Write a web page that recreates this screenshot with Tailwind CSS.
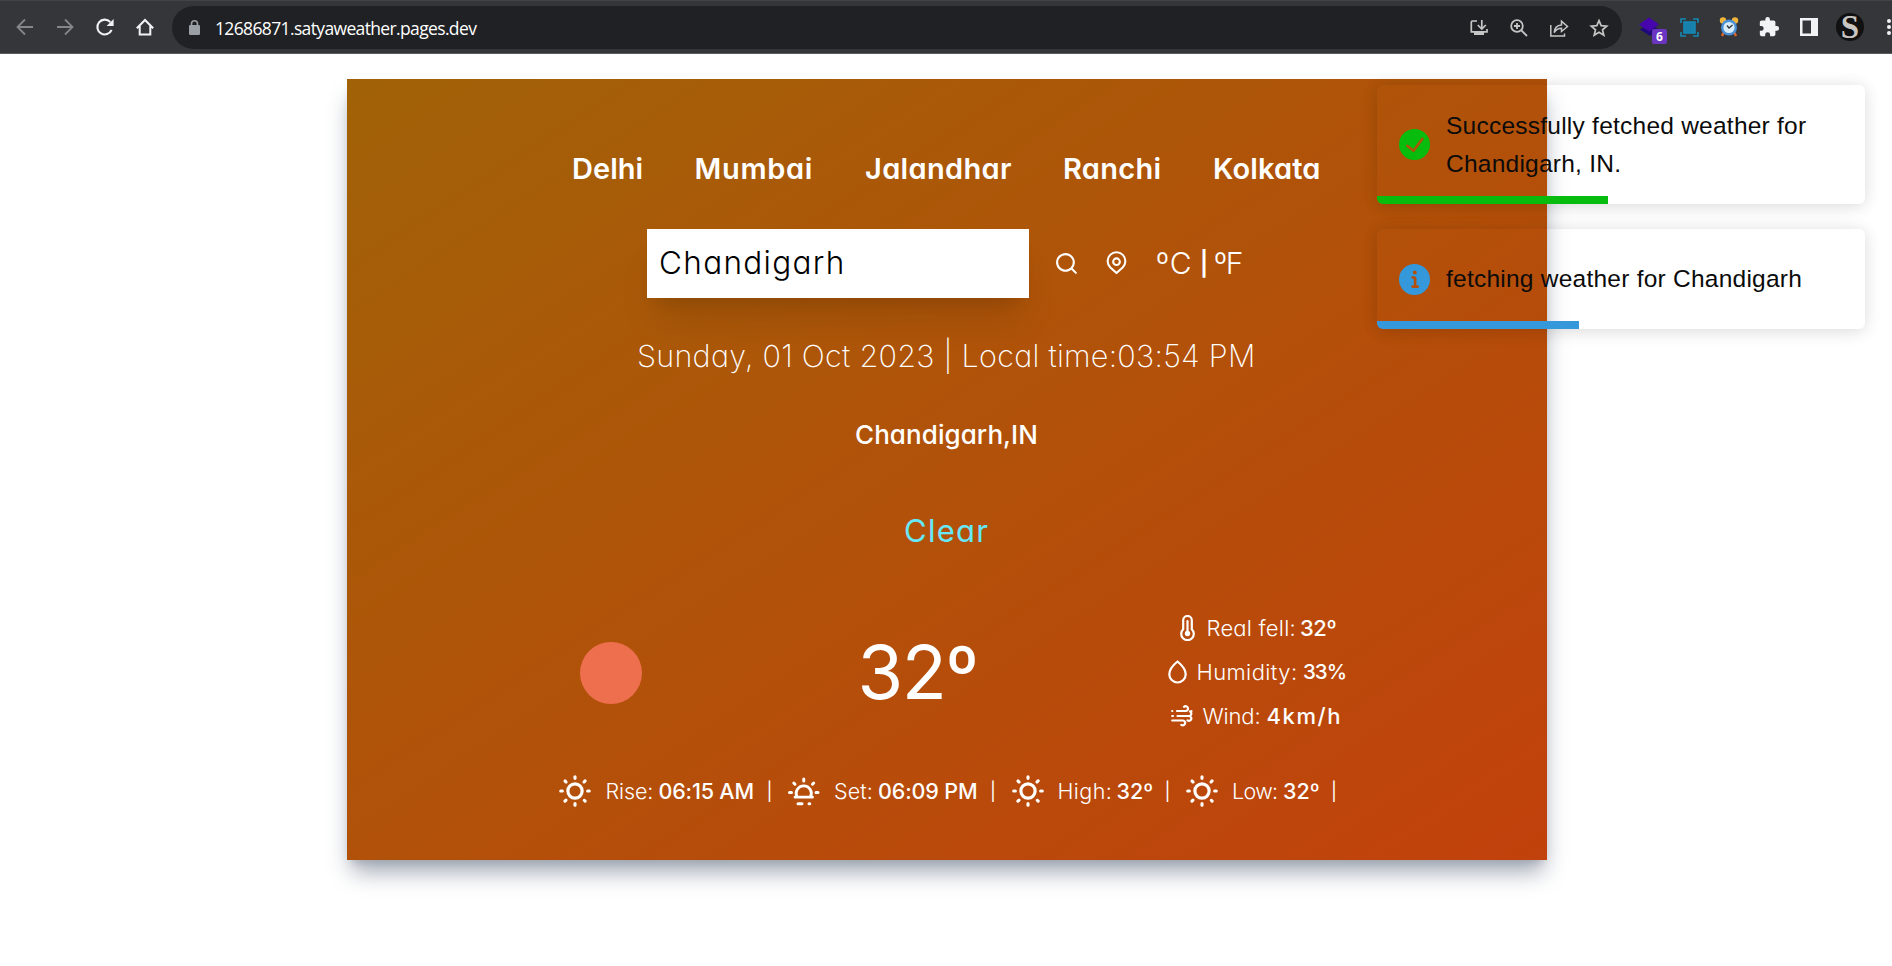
<!DOCTYPE html>
<html lang="en">
<head>
<meta charset="utf-8">
<title>Weather</title>
<script src="https://cdn.jsdelivr.net/npm/@tailwindcss/browser@4"></script>
</head>
<body class="relative h-[966px] w-[1892px] overflow-hidden bg-white font-['Inter',sans-serif]">
<svg class="hidden">
  <symbol id="sun" viewBox="0 0 24 24"><path fill="currentColor" d="M5.64,17l-.71.71a1,1,0,0,0,0,1.41,1,1,0,0,0,1.41,0l.71-.71A1,1,0,0,0,5.64,17ZM5,12a1,1,0,0,0-1-1H3a1,1,0,0,0,0,2H4A1,1,0,0,0,5,12Zm7-7a1,1,0,0,0,1-1V3a1,1,0,0,0-2,0V4A1,1,0,0,0,12,5ZM5.64,7.05a1,1,0,0,0,.7.29,1,1,0,0,0,.71-.29,1,1,0,0,0,0-1.41l-.71-.71A1,1,0,0,0,4.93,6.34Zm12,.29a1,1,0,0,0,.7-.29l.71-.71a1,1,0,1,0-1.41-1.41L17,5.64a1,1,0,0,0,0,1.41A1,1,0,0,0,17.66,7.34ZM21,11H20a1,1,0,0,0,0,2h1a1,1,0,0,0,0-2Zm-9,8a1,1,0,0,0-1,1v1a1,1,0,0,0,2,0V20A1,1,0,0,0,12,19ZM18.36,17A1,1,0,0,0,17,18.36l.71.71a1,1,0,0,0,1.41,0,1,1,0,0,0,0-1.41ZM12,6.5A5.5,5.5,0,1,0,17.5,12,5.51,5.51,0,0,0,12,6.5Zm0,9A3.5,3.5,0,1,1,15.5,12,3.5,3.5,0,0,1,12,15.5Z"/></symbol>
</svg>

<!-- Browser toolbar -->
<header class="flex h-[54px] items-start border-t border-b border-t-[#424347] border-b-[#5b5c60] bg-[#35363a]">
  <div class="flex h-[52px] w-[172px] shrink-0 items-center pl-[15px]">
    <svg class="h-5 w-5 text-[#85868a]" viewBox="0 0 20 20" fill="none" stroke="currentColor" stroke-width="1.8"><path d="M18 10H3M10 2.500L2.500 10L10 17.500"/></svg>
    <svg class="ml-5 h-5 w-5 text-[#85868a]" viewBox="0 0 20 20" fill="none" stroke="currentColor" stroke-width="1.800"><path d="M2 10H17M10 2.500L17.500 10L10 17.500"/></svg>
    <svg class="ml-5 h-5 w-5 text-[#f1f3f4]" viewBox="0 0 20 20"><path d="M16.600 12.800A7.400 7.400 0 1 1 15.200 5" fill="none" stroke="currentColor" stroke-width="2.100"/><path d="M18.600 2V9H11.600Z" fill="currentColor"/></svg>
    <svg class="ml-5 h-5 w-5 text-[#f1f3f4]" viewBox="0 0 20 20" fill="none" stroke="currentColor" stroke-width="2"><path d="M1.800 11.300L10 3L18.200 11.300M4.700 9V17.500H15.300V9"/></svg>
  </div>
  <div class="mt-[5px] flex h-[43px] w-[1450px] shrink-0 items-center rounded-full bg-[#202124] pl-[17px]">
    <svg class="h-[15px] w-[11px]" viewBox="0 0 11 15"><rect y="5" width="11" height="10" rx="1.200" fill="#9aa0a6"/><path d="M2.500 6V3.800a3 3 0 0 1 6 0V6" fill="none" stroke="#9aa0a6" stroke-width="1.600"/></svg>
    <span class="ml-[15px] w-[1254px] font-['Open_Sans',sans-serif] text-[17.500px] leading-6 tracking-[-0.64px] text-white">12686871.satyaweather.pages.dev</span>
    <span class="flex items-center gap-5 text-[#c4c7c5]">
      <svg class="h-5 w-5" viewBox="0 0 20 20" fill="none" stroke="currentColor" stroke-width="1.700"><path d="M8 3H3.500a1.200 1.200 0 0 0-1.200 1.200V13.800H18V11M12.800 2V10.500M8.800 7L12.800 11L16.800 7"/><path d="M5 14h10v3H5z" fill="currentColor" stroke="none"/></svg>
      <svg class="h-5 w-5" viewBox="0 0 20 20" fill="none" stroke="currentColor" stroke-width="1.800"><circle cx="8" cy="8" r="5.800"/><path d="M12.500 12.500L18 18M5 8H11M8 5V11"/></svg>
      <svg class="h-5 w-5" viewBox="0 0 20 20" fill="none" stroke="currentColor" stroke-width="1.500"><path d="M1.800 7V18H15.500V15.500M5.200 14.500C5.500 10 8 7.300 12.500 7V3.200L18.500 8.500L12.500 13.500V10.300C9 10.300 7 11.500 5.200 14.500Z"/></svg>
      <svg class="h-5 w-5" viewBox="0 0 20 20" fill="none" stroke="currentColor" stroke-width="1.700"><path d="M10 2.600L12.200 7.700L17.700 8.200L13.500 11.800L14.800 17.200L10 14.300L5.200 17.200L6.500 11.800L2.300 8.200L7.800 7.700Z"/></svg>
    </span>
  </div>
  <div class="flex h-[52px] flex-1 items-center pl-[17px]">
    <div class="relative h-5 w-7 shrink-0">
      <svg class="h-5 w-5" viewBox="0 0 20 20"><path d="M1 12.500L10 6.500L20 12.500L11 19Z" fill="#1e0a78"/><path d="M0 7.500L10 0.500L20 7.500L10 14.500Z" fill="#4706ad"/></svg>
      <span class="absolute left-[13px] top-3 flex h-[15px] w-[15px] items-center justify-center rounded-xs bg-[#6a35c0] font-['Open_Sans',sans-serif] text-[12px] leading-none font-bold text-white">6</span>
    </div>
    <svg class="ml-[13px] h-[19px] w-[19px] shrink-0" viewBox="0 0 19 19" fill="none" stroke="#1589b4" stroke-width="1.600"><path d="M1 5V1H6M13 1H18V5M18 14V18H13M6 18H1V14"/><rect x="4" y="4" width="11" height="11" fill="#1780ab"/></svg>
    <svg class="ml-5 h-5 w-5 shrink-0" viewBox="0 0 20 20"><path d="M5 15L3 19M15 15L17 19" stroke="#e0662a" stroke-width="2.400"/><circle cx="4" cy="3.500" r="3.200" fill="#f2b53a"/><circle cx="16" cy="3.500" r="3.200" fill="#f2b53a"/><circle cx="10" cy="10.500" r="8" fill="#4a90d6"/><circle cx="10" cy="10.500" r="5.600" fill="#d8ecfa"/><path d="M8 8.500L10 11L13.500 8" fill="none" stroke="#333" stroke-width="1.300"/></svg>
    <svg class="ml-[19px] h-[22px] w-[22px] shrink-0" viewBox="0 0 24 24"><path fill="#f1f3f4" d="M20.500 11H19V7c0-1.100-.9-2-2-2h-4V3.500a2.500 2.500 0 0 0-5 0V5H4c-1.100 0-2 .9-2 2v3.800h1.500a2.700 2.700 0 0 1 0 5.400H2V20c0 1.100.9 2 2 2h3.800v-1.500a2.700 2.700 0 0 1 5.400 0V22H17c1.100 0 2-.9 2-2v-4h1.500a2.500 2.500 0 0 0 0-5z"/></svg>
    <svg class="ml-[20px] h-[18px] w-[18px] shrink-0" viewBox="0 0 18 18"><path fill="#f1f3f4" fill-rule="evenodd" d="M0 0H18V18H0ZM2.500 2.500V15.500H11V2.500Z"/></svg>
    <span class="ml-[18px] flex h-7 w-7 shrink-0 items-center justify-center rounded-full bg-[#111] font-['Liberation_Serif',serif] text-[33px] leading-none font-bold text-[#c9c6c2]">S</span>
    <span class="ml-[23px] flex shrink-0 flex-col gap-[2px]"><i class="h-1 w-1 rounded-full bg-[#f1f3f4]"></i><i class="h-1 w-1 rounded-full bg-[#f1f3f4]"></i><i class="h-1 w-1 rounded-full bg-[#f1f3f4]"></i></span>
  </div>
</header>

<!-- Weather card -->
<main class="mt-[25px] ml-[347px] flex h-[781px] w-[1200px] flex-col bg-linear-to-br/srgb from-[#a16207] to-[#c2410c] pt-[70px] whitespace-nowrap text-white shadow-[0_15px_22.5px_-4.5px_#9ca3af,0_6px_9px_-6px_#9ca3af] [font-feature-settings:'cv11']">
  <nav class="flex h-10 shrink-0 items-center pl-[225px] text-[29px] font-semibold">
    <span class="w-[122.500px] tracking-[0.001em]">Delhi</span>
    <span class="w-[170.500px] tracking-[0.024em]">Mumbai</span>
    <span class="w-[198px] tracking-[0.012em]">Jalandhar</span>
    <span class="w-[150px] tracking-[0.01em]">Ranchi</span>
    <span class="tracking-[0.005em]">Kolkata</span>
  </nav>

  <div class="mt-10 flex h-[69px] shrink-0 items-center pl-[300px] text-[30px] font-light">
    <div class="flex h-[69px] w-[382px] items-center bg-white pb-px pl-3 text-[31.500px] tracking-[0.042em] text-black shadow-[0_30px_37.5px_-7.5px_rgb(0_0_0/0.1),0_12px_15px_-9px_rgb(0_0_0/0.1)]">Chandigarh</div>
    <svg class="ml-[25px] h-[25px] w-[25px]" viewBox="0 0 24 24"><path fill="currentColor" d="M21.710,20.290,18,16.610A9,9,0,1,0,16.610,18l3.680,3.680a1,1,0,0,0,1.420,0A1,1,0,0,0,21.710,20.290ZM11,18a7,7,0,1,1,7-7A7,7,0,0,1,11,18Z"/></svg>
    <svg class="ml-[24.500px] h-[25px] w-[25px]" viewBox="0 0 24 24" fill="none" stroke="currentColor" stroke-width="2" stroke-linejoin="round"><path d="M12 21.200L6.100 15.800A8.500 8.500 0 1 1 17.900 15.800Z"/><circle cx="12" cy="10.300" r="3.200"/></svg>
    <span class="ml-[27.500px] w-9 tracking-[0.03em]">ºC</span>
    <span class="flex w-[24px] justify-center text-[24px] font-semibold">|</span>
    <span class="-ml-[2px] text-[30px] tracking-[-0.04em]">ºF</span>
  </div>

  <div class="mt-[38px] h-10 shrink-0 pl-[290px] text-[30.500px] leading-10 font-extralight tracking-[0.009em]">Sunday, 01 Oct 2023 | Local time:03:54 PM</div>
  <div class="mt-[41px] h-9 shrink-0 pl-[508px] text-[26px] leading-9 font-medium tracking-[0.003em]">Chandigarh,IN</div>
  <div class="mt-[58px] h-10 shrink-0 pl-[557px] text-[31px] leading-10 tracking-[0.04em] text-[#67e8f9]">Clear</div>

  <div class="mt-[55px] flex h-[132px] shrink-0 items-center pl-[232.500px]">
    <div class="mt-[2px] h-[62px] w-[62px] rounded-full bg-[#ee6f4e]"></div>
    <div class="ml-[216px] w-[302.500px] text-[74px] leading-none tracking-[-0.019em]">32º</div>
    <div class="flex flex-col text-[22px] leading-[44px]">
      <div class="flex items-center pl-5">
        <svg class="h-[26px] w-[15px]" viewBox="0 0 15 26" fill="none" stroke="currentColor"><path d="M3.200 14.200V5.300a4.300 4.300 0 0 1 8.600 0v8.900a6.300 6.300 0 1 1-8.600 0Z" stroke-width="2.200"/><circle cx="7.500" cy="18.500" r="2.700" fill="currentColor" stroke="none"/><path d="M7.500 18V6" stroke-width="2.200" stroke-linecap="round"/></svg>
        <span class="ml-[11.500px] w-[93.500px] font-light tracking-[0.01em]">Real fell:</span><span class="font-medium tracking-[-0.02em]">32º</span>
      </div>
      <div class="flex items-center pl-2">
        <svg class="h-6 w-[19px]" viewBox="0 0 19 24" fill="none" stroke="currentColor" stroke-width="2.200" stroke-linejoin="round"><path d="M9.500 1.500C12 3.500 17.700 8.500 17.700 14.300A8.200 8.200 0 0 1 1.300 14.300C1.300 8.500 7 3.500 9.500 1.500Z"/></svg>
        <span class="ml-[9.500px] w-[106.500px] font-light tracking-[0.018em]">Humidity:</span><span class="text-[20.500px] font-medium tracking-[-0.05em]">33%</span>
      </div>
      <div class="flex items-center pl-[11px]">
        <svg class="h-[22px] w-[22px]" viewBox="0 0 22 22" fill="none" stroke="currentColor" stroke-width="2.200" stroke-linecap="round"><path d="M1.200 6H1.300M6 6H14.700A2.400 2.400 0 1 0 13 1.800M20.500 6V6.100M6.500 11H18.500A2.400 2.400 0 0 0 19 6.500M18 11A2.400 2.400 0 1 1 16.500 15.300M1.200 11H2M1.200 15.500H9.500M9.500 15.500H12A2.400 2.400 0 1 1 10.300 19.800"/></svg>
        <span class="ml-[9.500px] w-[64px] font-light tracking-[-0.008em]">Wind:</span><span class="font-medium tracking-[0.072em]">4km/h</span>
      </div>
    </div>
  </div>

  <div class="mt-[33px] flex h-10 shrink-0 items-center pl-[209px] text-[21.500px] font-medium">
    <svg class="h-[38px] w-[38px]"><use href="#sun"/></svg>
    <span class="ml-[11.500px] w-[53px] font-light tracking-[-0.005em]">Rise:</span><span class="w-[107.500px] tracking-[-0.008em]">06:15 AM</span><span class="flex w-[7px] justify-center text-[18px] font-normal">|</span>
    <svg class="ml-3 h-[38px] w-[38px]" viewBox="0 0 38 38" fill="none" stroke="currentColor" stroke-width="3" stroke-linecap="round"><path d="M10 25.200H27.500M12 25A7.600 7.600 0 1 1 25.500 25" stroke-width="2.800"/><path d="M18.750 7V9M8.800 11L10 12.200M28.700 11L27.500 12.200M4.500 20.500H6.500M31 20.500H33M13 31.800H17M24 31.800H24.800"/></svg>
    <span class="ml-[11px] w-11 font-light tracking-[0.005em]">Set:</span><span class="w-[111.500px] tracking-[-0.006em]">06:09 PM</span><span class="flex w-[7px] justify-center text-[18px] font-normal">|</span>
    <svg class="ml-3 h-[38px] w-[38px]"><use href="#sun"/></svg>
    <span class="ml-[11px] w-[59px] font-light tracking-[0.02em]">High:</span><span class="w-[47.500px]">32º</span><span class="flex w-[7px] justify-center text-[18px] font-normal">|</span>
    <svg class="ml-[11.500px] h-[38px] w-[38px]"><use href="#sun"/></svg>
    <span class="ml-[11.500px] w-[51px] font-light tracking-[-0.03em]">Low:</span><span class="w-[47.500px]">32º</span><span class="flex w-[7px] justify-center text-[18px] font-normal">|</span>
  </div>
</main>

<!-- Toast notifications float over the card -->
<aside class="absolute top-[85px] left-[1377px] flex w-[488px] flex-col gap-[25px] font-['Liberation_Sans',sans-serif] text-[24.500px] leading-[38px] tracking-[0.24px] text-[#0b0b0b]">
  <div class="relative flex h-[119px] items-center overflow-hidden rounded-md pl-[22px] shadow-[0_1.5px_15px_rgb(0_0_0/0.1),0_3px_22px_rgb(0_0_0/0.05)]">
    <svg class="h-[31px] w-[31px] shrink-0" viewBox="0 0 24 24" fill="#07bc0c"><path d="M12 0a12 12 0 1012 12A12.014 12.014 0 0012 0zm6.927 8.200l-6.845 9.289a1.011 1.011 0 01-1.430.188l-4.888-3.908a1 1 0 111.250-1.562l4.076 3.261 6.227-8.451a1 1 0 111.610 1.183z"/></svg>
    <p class="ml-4 w-[390px]">Successfully fetched weather for Chandigarh, IN.</p>
    <div class="absolute bottom-0 left-0 h-2 w-[231px] bg-[#07bc0c]"></div>
  </div>
  <div class="relative flex h-[100px] items-center overflow-hidden rounded-md pl-[22px] shadow-[0_1.5px_15px_rgb(0_0_0/0.1),0_3px_22px_rgb(0_0_0/0.05)]">
    <svg class="h-[31px] w-[31px] shrink-0" viewBox="0 0 24 24" fill="#3498db"><path d="M12 0a12 12 0 1012 12A12.013 12.013 0 0012 0zm.250 5a1.500 1.500 0 11-1.500 1.500 1.500 1.500 0 011.500-1.500zm2.250 13.500h-4a1 1 0 010-2h.750a.250.250 0 00.250-.250v-4.500a.250.250 0 00-.250-.250h-.750a1 1 0 010-2h1a2 2 0 012 2v4.750a.250.250 0 00.250.250h.750a1 1 0 110 2z"/></svg>
    <p class="ml-4">fetching weather for Chandigarh</p>
    <div class="absolute bottom-0 left-0 h-2 w-[202px] bg-[#3498db]"></div>
  </div>
</aside>
</body>
</html>
